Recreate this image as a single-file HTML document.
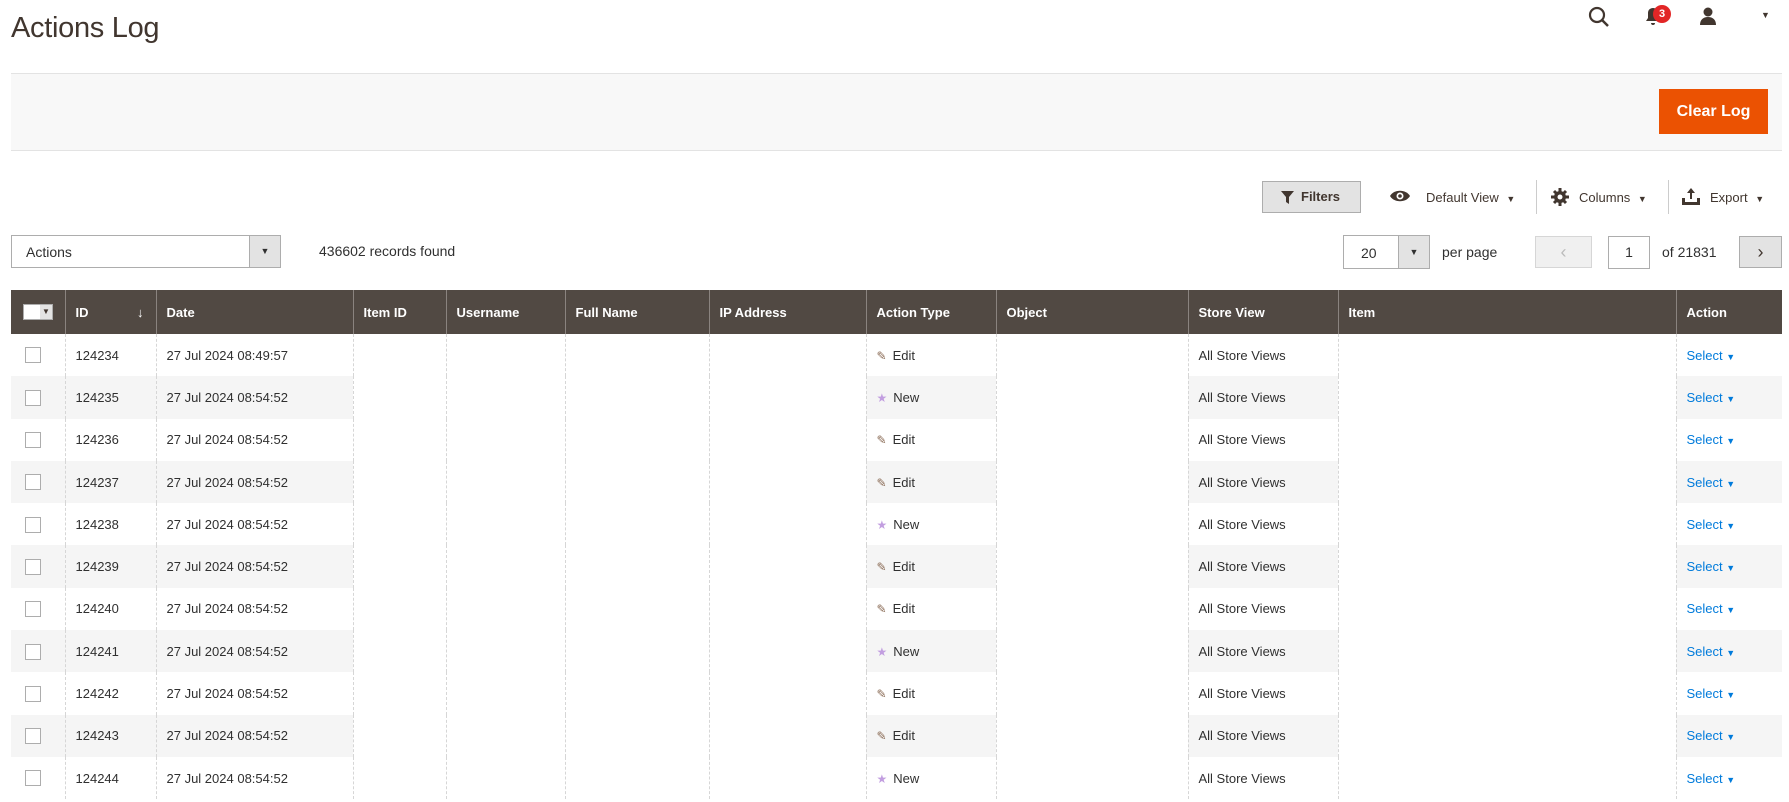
<!DOCTYPE html>
<html><head><meta charset="utf-8"><style>
*{box-sizing:border-box;margin:0;padding:0}
body{width:1789px;height:802px;overflow:hidden;background:#fff;font-family:"Liberation Sans",sans-serif;color:#303030;position:relative;font-size:13px}
.a{position:absolute}
h1{position:absolute;left:11px;top:12px;font-weight:400;font-size:29px;color:#41362f;letter-spacing:-0.3px}
.bar{left:11px;top:73px;width:1771px;height:78px;background:#f8f8f8;border-top:1px solid #e3e3e3;border-bottom:1px solid #e3e3e3}
.clear{left:1659px;top:89px;width:109px;height:45px;background:#eb5202;color:#fff;font-weight:bold;font-size:16px;line-height:45px;text-align:center}
.filters{left:1262px;top:181px;width:99px;height:32px;background:#e3e3e3;border:1px solid #adadad;font-size:13px;font-weight:bold;line-height:30px;color:#41362f}
.tb{font-size:13px;color:#41362f;top:190px}
.sel{border:1px solid #adadad;background:#fff;height:33px}
table{position:absolute;left:11px;top:290px;border-collapse:collapse;table-layout:fixed;width:1771px}
th{background:#514943;color:#fff;font-weight:bold;text-align:left;height:44px;padding-left:10px;border-left:1px solid #8a837f;font-size:13px}
th:first-child{border-left:none}
td{height:42.3px;padding-left:10px;border-left:1px dashed #d6d6d6;font-size:13px;color:#303030}
td:first-child{border-left:none}
tr.g td.s{background:#f5f5f5}
.cb{display:inline-block;width:16px;height:16px;border:1px solid #adadad;background:#fff;margin-left:4px;vertical-align:middle}
.sl{color:#007bdb}
.ed{color:#8a6b55;margin-right:6px;font-size:12px}
.nw{color:#c29ee0;margin-right:6px;font-size:12px}
</style></head><body>
<h1>Actions Log</h1>
<svg class="a" style="left:1588px;top:6px" width="22" height="22" viewBox="0 0 22 22"><circle cx="9" cy="9" r="7" fill="none" stroke="#41362f" stroke-width="2.2"/><line x1="14" y1="14" x2="20" y2="20" stroke="#41362f" stroke-width="2.5"/></svg>
<svg class="a" style="left:1644px;top:7px" width="18" height="20" viewBox="0 0 18 20"><path d="M9 1c-3 0-5 2-5 5v5l-2 3h14l-2-3V6c0-3-2-5-5-5z M7 16a2 2 0 0 0 4 0z" fill="#41362f"/></svg>
<div class="a" style="left:1653px;top:5px;width:18px;height:18px;border-radius:50%;background:#e22626;color:#fff;font-size:11px;font-weight:bold;text-align:center;line-height:18px">3</div>
<svg class="a" style="left:1698px;top:6px" width="20" height="20" viewBox="0 0 20 20"><circle cx="10" cy="6" r="4.5" fill="#41362f"/><path d="M2 19c0-5 3-8 8-8s8 3 8 8z" fill="#41362f"/></svg>
<div class="a" style="left:1761px;top:10px;font-size:9px;color:#41362f">▼</div>
<div class="a bar"></div>
<div class="a clear">Clear Log</div>
<div class="a filters"><svg style="position:absolute;left:18px;top:9px" width="13" height="13" viewBox="0 0 13 13"><path d="M0 0h13L8 6v7L5 11V6z" fill="#41362f"/></svg><span style="position:absolute;left:38px">Filters</span></div>
<svg class="a" style="left:1389px;top:189px" width="22" height="14" viewBox="0 0 22 14"><path d="M1 7C5 0 17 0 21 7C17 14 5 14 1 7z" fill="#41362f"/><circle cx="11" cy="7" r="3.5" fill="#fff"/><circle cx="11" cy="7" r="1.8" fill="#41362f"/></svg>
<div class="a tb" style="left:1426px">Default View <span style="font-size:9px;margin-left:4px">▼</span></div>
<div class="a" style="left:1536px;top:180px;width:1px;height:34px;background:#ccc"></div>
<svg class="a" style="left:1551px;top:188px" width="18" height="18" viewBox="0 0 18 18"><circle cx="9" cy="9" r="6" fill="#41362f"/><g stroke="#41362f" stroke-width="3"><line x1="9" y1="0" x2="9" y2="18"/><line x1="0" y1="9" x2="18" y2="9"/><line x1="3" y1="3" x2="15" y2="15"/><line x1="15" y1="3" x2="3" y2="15"/></g><circle cx="9" cy="9" r="2.5" fill="#fff"/></svg>
<div class="a tb" style="left:1579px">Columns <span style="font-size:9px;margin-left:4px">▼</span></div>
<div class="a" style="left:1668px;top:180px;width:1px;height:34px;background:#ccc"></div>
<svg class="a" style="left:1682px;top:188px" width="18" height="17" viewBox="0 0 18 17"><path d="M9 0l-4 5h3v6h2V5h3z M0 10h3v4h12v-4h3v7H0z" fill="#41362f"/></svg>
<div class="a tb" style="left:1710px">Export <span style="font-size:9px;margin-left:4px">▼</span></div>
<div class="a sel" style="left:11px;top:235px;width:270px"><span style="position:absolute;left:14px;top:8px;font-size:14px">Actions</span><div style="position:absolute;right:0;top:0;width:31px;height:31px;background:#e3e3e3;border-left:1px solid #adadad;text-align:center;line-height:31px;font-size:9px">▼</div></div>
<div class="a" style="left:319px;top:243px;font-size:14px">436602 records found</div>
<div class="a sel" style="left:1343px;top:235px;width:87px;height:34px"><span style="position:absolute;left:17px;top:9px;font-size:14px">20</span><div style="position:absolute;right:0;top:0;width:31px;height:32px;background:#e3e3e3;border-left:1px solid #adadad;text-align:center;line-height:32px;font-size:9px">▼</div></div>
<div class="a" style="left:1442px;top:244px;font-size:14px">per page</div>
<div class="a" style="left:1535px;top:236px;width:57px;height:32px;background:#f0f0f0;border:1px solid #d6d6d6;color:#bbb;text-align:center;line-height:30px;font-size:18px">‹</div>
<div class="a sel" style="left:1608px;top:236px;width:42px;height:33px;text-align:center;line-height:31px;font-size:14px">1</div>
<div class="a" style="left:1662px;top:244px;font-size:14px">of 21831</div>
<div class="a" style="left:1739px;top:236px;width:43px;height:32px;background:#e3e3e3;border:1px solid #adadad;color:#41362f;text-align:center;line-height:30px;font-size:18px">›</div>
<table>
<colgroup><col style="width:54px"><col style="width:91px"><col style="width:197px"><col style="width:93px"><col style="width:119px"><col style="width:144px"><col style="width:157px"><col style="width:130px"><col style="width:192px"><col style="width:150px"><col style="width:338px"><col style="width:106px"></colgroup>
<tr><th style="padding-left:12px"><span style="display:inline-block;width:30px;height:16px;background:#fff;border:1px solid #adadad;position:relative;vertical-align:middle"><span style="position:absolute;right:0;top:0;width:12px;height:14px;background:#e3e3e3;color:#41362f;font-size:8px;text-align:center;line-height:14px">▼</span></span></th><th>ID<span style="float:right;margin-right:12px;font-weight:normal">↓</span></th><th>Date</th><th>Item ID</th><th>Username</th><th>Full Name</th><th>IP Address</th><th>Action Type</th><th>Object</th><th>Store View</th><th>Item</th><th>Action</th></tr>
<tr><td class="s"><span class="cb"></span></td><td class="s">124234</td><td class="s">27 Jul 2024 08:49:57</td><td></td><td></td><td></td><td></td><td class="s"><span class="ed">✎</span>Edit</td><td></td><td class="s">All Store Views</td><td></td><td class="s"><span class="sl">Select <span style="font-size:9px">▼</span></span></td></tr>
<tr class="g"><td class="s"><span class="cb"></span></td><td class="s">124235</td><td class="s">27 Jul 2024 08:54:52</td><td></td><td></td><td></td><td></td><td class="s"><span class="nw">★</span>New</td><td></td><td class="s">All Store Views</td><td></td><td class="s"><span class="sl">Select <span style="font-size:9px">▼</span></span></td></tr>
<tr><td class="s"><span class="cb"></span></td><td class="s">124236</td><td class="s">27 Jul 2024 08:54:52</td><td></td><td></td><td></td><td></td><td class="s"><span class="ed">✎</span>Edit</td><td></td><td class="s">All Store Views</td><td></td><td class="s"><span class="sl">Select <span style="font-size:9px">▼</span></span></td></tr>
<tr class="g"><td class="s"><span class="cb"></span></td><td class="s">124237</td><td class="s">27 Jul 2024 08:54:52</td><td></td><td></td><td></td><td></td><td class="s"><span class="ed">✎</span>Edit</td><td></td><td class="s">All Store Views</td><td></td><td class="s"><span class="sl">Select <span style="font-size:9px">▼</span></span></td></tr>
<tr><td class="s"><span class="cb"></span></td><td class="s">124238</td><td class="s">27 Jul 2024 08:54:52</td><td></td><td></td><td></td><td></td><td class="s"><span class="nw">★</span>New</td><td></td><td class="s">All Store Views</td><td></td><td class="s"><span class="sl">Select <span style="font-size:9px">▼</span></span></td></tr>
<tr class="g"><td class="s"><span class="cb"></span></td><td class="s">124239</td><td class="s">27 Jul 2024 08:54:52</td><td></td><td></td><td></td><td></td><td class="s"><span class="ed">✎</span>Edit</td><td></td><td class="s">All Store Views</td><td></td><td class="s"><span class="sl">Select <span style="font-size:9px">▼</span></span></td></tr>
<tr><td class="s"><span class="cb"></span></td><td class="s">124240</td><td class="s">27 Jul 2024 08:54:52</td><td></td><td></td><td></td><td></td><td class="s"><span class="ed">✎</span>Edit</td><td></td><td class="s">All Store Views</td><td></td><td class="s"><span class="sl">Select <span style="font-size:9px">▼</span></span></td></tr>
<tr class="g"><td class="s"><span class="cb"></span></td><td class="s">124241</td><td class="s">27 Jul 2024 08:54:52</td><td></td><td></td><td></td><td></td><td class="s"><span class="nw">★</span>New</td><td></td><td class="s">All Store Views</td><td></td><td class="s"><span class="sl">Select <span style="font-size:9px">▼</span></span></td></tr>
<tr><td class="s"><span class="cb"></span></td><td class="s">124242</td><td class="s">27 Jul 2024 08:54:52</td><td></td><td></td><td></td><td></td><td class="s"><span class="ed">✎</span>Edit</td><td></td><td class="s">All Store Views</td><td></td><td class="s"><span class="sl">Select <span style="font-size:9px">▼</span></span></td></tr>
<tr class="g"><td class="s"><span class="cb"></span></td><td class="s">124243</td><td class="s">27 Jul 2024 08:54:52</td><td></td><td></td><td></td><td></td><td class="s"><span class="ed">✎</span>Edit</td><td></td><td class="s">All Store Views</td><td></td><td class="s"><span class="sl">Select <span style="font-size:9px">▼</span></span></td></tr>
<tr><td class="s"><span class="cb"></span></td><td class="s">124244</td><td class="s">27 Jul 2024 08:54:52</td><td></td><td></td><td></td><td></td><td class="s"><span class="nw">★</span>New</td><td></td><td class="s">All Store Views</td><td></td><td class="s"><span class="sl">Select <span style="font-size:9px">▼</span></span></td></tr>
</table>
</body></html>
